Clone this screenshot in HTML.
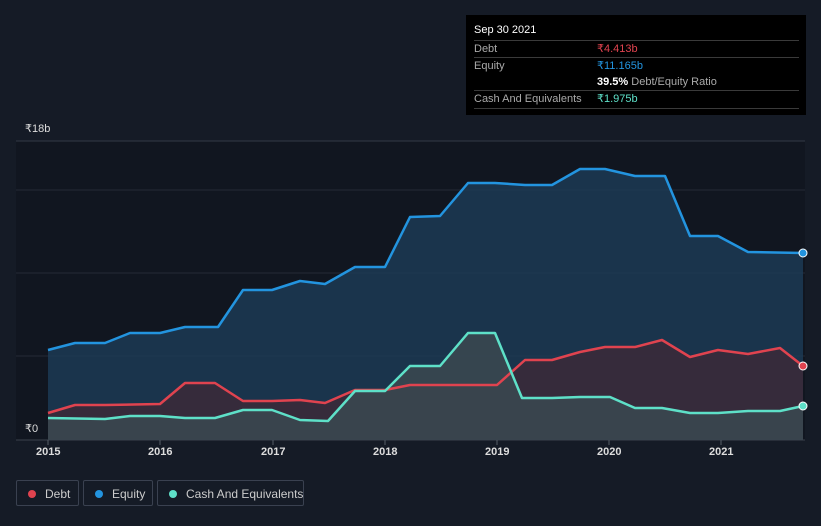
<!DOCTYPE html><html><head><style>
body{margin:0;width:821px;height:526px;background:#151b26;font-family:"Liberation Sans",sans-serif;overflow:hidden;position:relative}
.tt{position:absolute;left:466px;top:15px;width:340px;height:100px;background:#000;color:#fff;font-size:11px}
.row{position:absolute;left:8px;width:325px;border-top:1px solid #3a3a3a;height:17px;line-height:17px;color:#aaa}
.v{position:absolute;left:123px;white-space:nowrap}
.leg{position:absolute;top:480px;height:26px;border:1px solid #3a4150;border-radius:2px;color:#ccc;font-size:12px;line-height:26px;box-sizing:border-box;white-space:nowrap}
.leg i{position:absolute;left:11px;top:9px;width:8px;height:8px;border-radius:50%}
.leg span{position:absolute;left:28px}
.yr{position:absolute;top:446px;color:#ddd;font-size:11px;font-weight:bold}
</style></head><body>
<svg width="821" height="526" style="position:absolute;left:0;top:0">
<rect x="16" y="141" width="789" height="299" fill="#111620"/>
<line x1="16" y1="141" x2="805" y2="141" stroke="#333a46"/>
<line x1="16" y1="190" x2="805" y2="190" stroke="#252b36"/>
<line x1="16" y1="273" x2="805" y2="273" stroke="#252b36"/>
<line x1="16" y1="356" x2="805" y2="356" stroke="#252b36"/>
<line x1="16" y1="440" x2="805" y2="440" stroke="#3a414c"/>
<polygon fill="#1c3a55" opacity="0.85" points="48,440 48,350 75,343 105,343 130,333 160,333 185,327 218,327 243,290 272,290 300,281 325,284 355,267 385,267 410,217 440,216 468,183 495,183 525,185 552,185 580,169 605,169 635,176 665,176 690,236 718,236 748,252 803,253 803,440"/>
<polygon fill="#3a2a3a" opacity="0.9" points="48,440 48,413 75,405 105,405 160,404 185,383 215,383 243,401 272,401 300,400 325,403 355,390 385,390 410,385 497,385 525,360 552,360 580,352 605,347 635,347 662,340 690,357 718,350 748,354 780,348 803,366 803,440"/>
<polygon fill="#3a4750" opacity="0.9" points="48,440 48,418 105,419 130,416 160,416 185,418 215,418 243,410 272,410 300,420 328,421 355,391 385,391 410,366 440,366 468,333 495,333 522,398 552,398 580,397 610,397 635,408 662,408 690,413 718,413 748,411 780,411 803,406 803,440"/>
<g fill="none" stroke-width="2.5" stroke-linejoin="round">
<polyline stroke="#2394df" points="48,350 75,343 105,343 130,333 160,333 185,327 218,327 243,290 272,290 300,281 325,284 355,267 385,267 410,217 440,216 468,183 495,183 525,185 552,185 580,169 605,169 635,176 665,176 690,236 718,236 748,252 803,253"/>
<polyline stroke="#e0434f" points="48,413 75,405 105,405 160,404 185,383 215,383 243,401 272,401 300,400 325,403 355,390 385,390 410,385 497,385 525,360 552,360 580,352 605,347 635,347 662,340 690,357 718,350 748,354 780,348 803,366"/>
<polyline stroke="#5ee0c8" points="48,418 105,419 130,416 160,416 185,418 215,418 243,410 272,410 300,420 328,421 355,391 385,391 410,366 440,366 468,333 495,333 522,398 552,398 580,397 610,397 635,408 662,408 690,413 718,413 748,411 780,411 803,406"/>
</g>
<circle cx="803" cy="253" r="4" fill="#2394df" stroke="#fff" stroke-width="1"/>
<circle cx="803" cy="366" r="4" fill="#e0434f" stroke="#fff" stroke-width="1"/>
<circle cx="803" cy="406" r="4" fill="#5ee0c8" stroke="#fff" stroke-width="1"/>
<g stroke="#555c66"><line x1="48" y1="440" x2="48" y2="445"/><line x1="160" y1="440" x2="160" y2="445"/><line x1="273" y1="440" x2="273" y2="445"/><line x1="385" y1="440" x2="385" y2="445"/><line x1="497" y1="440" x2="497" y2="445"/><line x1="609" y1="440" x2="609" y2="445"/><line x1="721" y1="440" x2="721" y2="445"/></g>
<text x="25" y="132" fill="#ddd" font-size="11" font-family="Liberation Sans">₹18b</text>
<text x="25" y="432" fill="#ddd" font-size="11" font-family="Liberation Sans">₹0</text>
</svg>
<div class="yr" style="left:36px">2015</div><div class="yr" style="left:148px">2016</div><div class="yr" style="left:261px">2017</div><div class="yr" style="left:373px">2018</div><div class="yr" style="left:485px">2019</div><div class="yr" style="left:597px">2020</div><div class="yr" style="left:709px">2021</div>
<div class="tt">
<div style="position:absolute;left:8px;top:9px;font-size:11px">Sep 30 2021</div>
<div class="row" style="top:25px">Debt<span class="v" style="color:#e0434f">₹4.413b</span></div>
<div class="row" style="top:42px">Equity<span class="v" style="color:#2394df">₹11.165b</span></div>
<div class="row" style="top:59px;border-top:none"><span class="v"><b style="color:#fff">39.5%</b> Debt/Equity Ratio</span></div>
<div class="row" style="top:75px;border-bottom:1px solid #3a3a3a">Cash And Equivalents<span class="v" style="color:#5ee0c8">₹1.975b</span></div>
</div>
<div class="leg" style="left:16px;width:63px"><i style="background:#e0434f"></i><span>Debt</span></div>
<div class="leg" style="left:83px;width:70px"><i style="background:#2394df"></i><span>Equity</span></div>
<div class="leg" style="left:157px;width:147px"><i style="background:#5ee0c8"></i><span>Cash And Equivalents</span></div>
</body></html>
